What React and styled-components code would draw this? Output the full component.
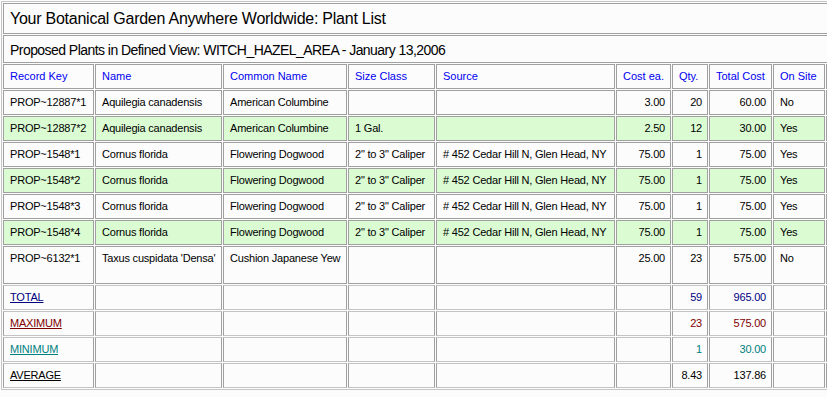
import styled, { createGlobalStyle } from "styled-components";

const GlobalStyle = createGlobalStyle`
  html, body {
    margin: 0;
    padding: 0;
    background: #fcfcfc;
    overflow: hidden;
  }
  body {
    font-family: "Liberation Sans", Arial, sans-serif;
    color: #000;
  }
`;

// fixed column widths, last column runs past the window edge
const COLUMNS = [91, 127, 124, 87, 179, 55, 36, 63, 52, 80];

const plants = [
  {
    key: "PROP~12887*1",
    name: "Aquilegia canadensis",
    common: "American Columbine",
    size: "",
    source: "",
    cost: "3.00",
    qty: "20",
    total: "60.00",
    onSite: "No",
  },
  {
    key: "PROP~12887*2",
    name: "Aquilegia canadensis",
    common: "American Columbine",
    size: "1 Gal.",
    source: "",
    cost: "2.50",
    qty: "12",
    total: "30.00",
    onSite: "Yes",
  },
  ...[1, 2, 3, 4].map((n) => ({
    key: `PROP~1548*${n}`,
    name: "Cornus florida",
    common: "Flowering Dogwood",
    size: '2" to 3" Caliper',
    source: "# 452 Cedar Hill N, Glen Head, NY",
    cost: "75.00",
    qty: "1",
    total: "75.00",
    onSite: "Yes",
  })),
  {
    key: "PROP~6132*1",
    name: "Taxus cuspidata 'Densa'",
    common: "Cushion Japanese Yew",
    size: "",
    source: "",
    cost: "25.00",
    qty: "23",
    total: "575.00",
    onSite: "No",
    tall: true,
  },
];

const summary = [
  { label: "TOTAL", qty: "59", total: "965.00", color: "#000080" },
  { label: "MAXIMUM", qty: "23", total: "575.00", color: "#800000" },
  { label: "MINIMUM", qty: "1", total: "30.00", color: "#008080" },
  { label: "AVERAGE", qty: "8.43", total: "137.86", color: "#000000" },
];

const PlantTable = styled.table`
  margin: 1px 0 0 1px;
  width: ${COLUMNS.reduce((a, b) => a + b, 0) + COLUMNS.length + 3}px;
  table-layout: fixed;
  border-collapse: separate;
  border-spacing: 1px;
  border: 1px solid #c6c6c6;
  background: #fcfcfc;
`;

const Col = styled.col`
  width: ${(p) => p.$w}px;
`;

const TitleRow = styled.tr`
  height: 31px;
`;

const SubtitleRow = styled.tr`
  height: 28px;
`;

const TitleCell = styled.td`
  box-sizing: border-box;
  border: 1px solid #a0a0a0;
  padding: 0 6px;
  font-size: 16px;
  letter-spacing: -0.25px;
  vertical-align: middle;
  white-space: nowrap;
`;

const SubtitleCell = styled(TitleCell)`
  font-size: 14px;
  letter-spacing: -0.55px;
  padding-top: 2px;
`;

const HeadRow = styled.tr`
  height: 25px;
`;

const HeadCell = styled.th`
  box-sizing: border-box;
  border: 1px solid #a0a0a0;
  padding: 0 5px 0 6px;
  font-size: 11px;
  line-height: 13px;
  font-weight: normal;
  text-align: left;
  color: #0000f0;
  white-space: nowrap;
  overflow: hidden;
`;

const Row = styled.tr`
  height: ${(p) => (p.$tall ? 38 : 25)}px;
  background: ${(p) => (p.$shade ? "#dbfbd3" : "transparent")};
`;

const Cell = styled.td`
  box-sizing: border-box;
  border: 1px solid #a0a0a0;
  padding: 5px 5px 0 6px;
  font-size: 11px;
  line-height: 13px;
  letter-spacing: -0.2px;
  vertical-align: top;
  text-align: ${(p) => p.$align || "left"};
  white-space: nowrap;
  overflow: hidden;
`;

const SumCell = styled(Cell)`
  border-color: #c4c4c4 #a0a0a0;
  color: ${(p) => p.$color};
`;

const SumLabel = styled.span`
  text-decoration: underline;
  color: ${(p) => p.$color};
`;

function PlantRow({ plant, shade }) {
  return (
    <Row $shade={shade} $tall={plant.tall}>
      <Cell>{plant.key}</Cell>
      <Cell>{plant.name}</Cell>
      <Cell>{plant.common}</Cell>
      <Cell>{plant.size}</Cell>
      <Cell>{plant.source}</Cell>
      <Cell $align="right">{plant.cost}</Cell>
      <Cell $align="right">{plant.qty}</Cell>
      <Cell $align="right">{plant.total}</Cell>
      <Cell>{plant.onSite}</Cell>
      <Cell />
    </Row>
  );
}

function SummaryRow({ item }) {
  return (
    <Row>
      <SumCell>
        <SumLabel $color={item.color}>{item.label}</SumLabel>
      </SumCell>
      <SumCell />
      <SumCell />
      <SumCell />
      <SumCell />
      <SumCell />
      <SumCell $align="right" $color={item.color}>
        {item.qty}
      </SumCell>
      <SumCell $align="right" $color={item.color}>
        {item.total}
      </SumCell>
      <SumCell />
      <SumCell />
    </Row>
  );
}

export default function App() {
  return (
    <>
      <GlobalStyle />
      <PlantTable>
        <colgroup>
          {COLUMNS.map((w, i) => (
            <Col key={i} $w={w} />
          ))}
        </colgroup>
        <tbody>
          <TitleRow>
            <TitleCell colSpan={10}>
              Your Botanical Garden Anywhere Worldwide: Plant List
            </TitleCell>
          </TitleRow>
          <SubtitleRow>
            <SubtitleCell colSpan={10}>
              Proposed Plants in Defined View: WITCH_HAZEL_AREA - January
              13,2006
            </SubtitleCell>
          </SubtitleRow>
          <HeadRow>
            <HeadCell>Record Key</HeadCell>
            <HeadCell>Name</HeadCell>
            <HeadCell>Common Name</HeadCell>
            <HeadCell>Size Class</HeadCell>
            <HeadCell>Source</HeadCell>
            <HeadCell>Cost ea.</HeadCell>
            <HeadCell>Qty.</HeadCell>
            <HeadCell>Total Cost</HeadCell>
            <HeadCell>On Site</HeadCell>
            <HeadCell />
          </HeadRow>
          {plants.map((p, i) => (
            <PlantRow key={p.key} plant={p} shade={i % 2 === 1} />
          ))}
          {summary.map((s) => (
            <SummaryRow key={s.label} item={s} />
          ))}
        </tbody>
      </PlantTable>
    </>
  );
}
